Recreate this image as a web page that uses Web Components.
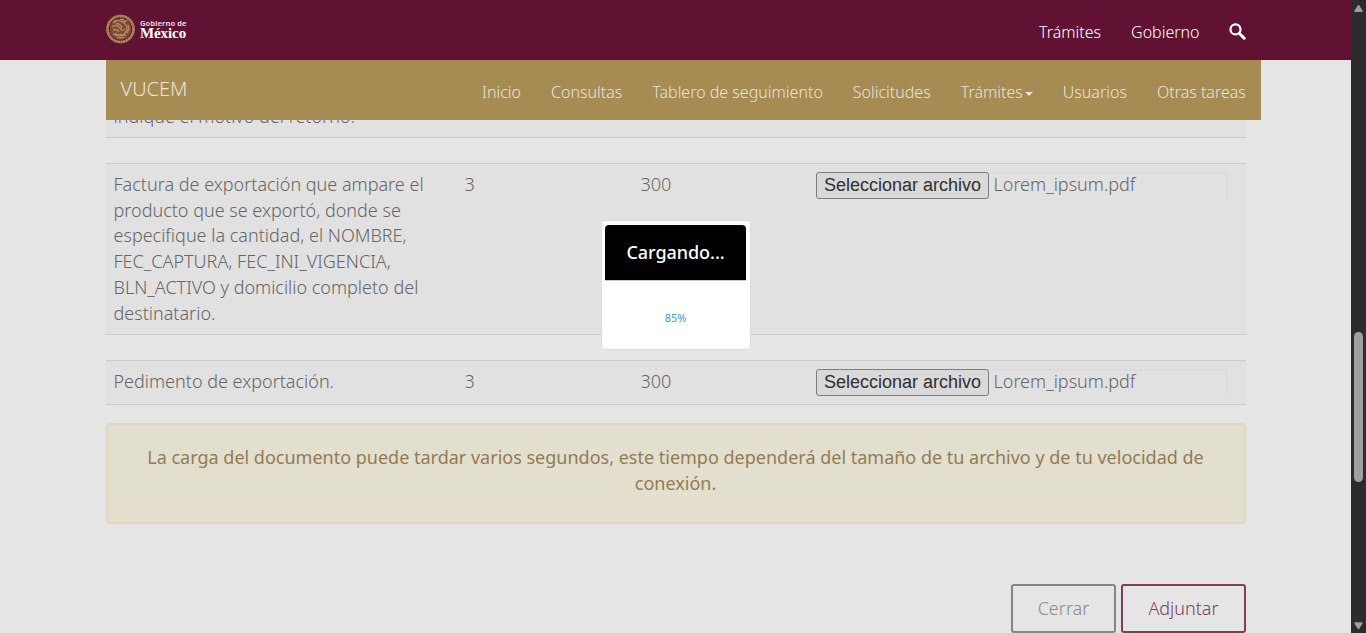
<!DOCTYPE html>
<html lang="es">
<head>
<meta charset="utf-8">
<title>VUCEM</title>
<style>
html,body{margin:0;height:100%;overflow:hidden;background:#e5e5e5}
body{font-family:"Noto Sans","Open Sans",sans-serif;font-weight:300;font-size:18px;line-height:25.7px;color:#666}
</style>
</head>
<body>
<vucem-app></vucem-app>
<script>
const define = (name, html) => customElements.define(name, class extends HTMLElement {
  constructor(){
    super();
    const t = document.createElement('template');
    t.innerHTML = html;
    this.attachShadow({mode:'open'}).appendChild(t.content.cloneNode(true));
  }
});

define('gob-logo', `<style>
:host{display:flex;align-items:center;gap:5px;color:#fff;height:30px}
svg{display:block}
.t{display:flex;flex-direction:column}
small{font:600 7.6px/9px "Noto Sans",sans-serif;letter-spacing:.1px;white-space:nowrap;color:#eee4e8}
b{font:700 15px/11px "Liberation Serif",serif;letter-spacing:-.1px}
</style>
<svg width="29" height="30" viewBox="0 0 29 30" fill="none" stroke="#b08a54">
<circle cx="14.5" cy="15" r="13" stroke-width="2.6" stroke="#94694a"/>
<circle cx="14.5" cy="15" r="13" stroke-width="2.4" stroke-dasharray="1.7 .9" stroke="#b28b55"/>
<circle cx="14.5" cy="15" r="10.8" fill="#80483f" stroke="none"/>
<path d="M8 9c2-3 6-3 8-1l4-1-2 2c3 2 4 6 2 9l-3 3c-3 1-6 0-8-2M6 13c3-2 6-2 8 1s4 3 5 1M7 16c3-1 5 0 6 2M10 10c3-1 5 1 6 4M7 20l4 1.5 4-1 5 1M11 23.5h7M22 11l1 4-2 4M10 6l-3 3M14 5.5h4" stroke-width="1.4"/>
</svg><span class="t"><small>Gobierno de</small><b>México</b></span>`);

define('gob-header', `<style>
:host{display:flex;box-sizing:border-box;height:60px;flex:none;background:#611232;color:#fff;padding:0 105px 0 106px;justify-content:space-between;align-items:flex-start;font-size:16px;line-height:24px}
gob-logo{margin-top:14px}
nav{display:flex;gap:30px;padding-top:20px}
svg{display:block;margin:3px 0 0 -.5px}
</style>
<gob-logo></gob-logo>
<nav><slot></slot><svg width="17" height="17" viewBox="0 0 17 17" fill="none" stroke="#fff"><circle cx="6.5" cy="6.4" r="5" stroke-width="2.2"/><path d="M10.2 10.2l5 5" stroke-width="3" stroke-linecap="round"/></svg></nav>`);

define('nav-item', `<style>
:host{display:flex;align-items:center;white-space:nowrap}
i{display:none;border:4px solid transparent;border-top-color:currentColor;border-bottom:0;margin:3px 0 0 2px}
:host([caret]) i{display:block}
</style><slot></slot><i></i>`);

define('vucem-nav', `<style>
:host{display:flex;box-sizing:border-box;width:1155px;height:60px;flex:none;margin-left:106px;padding:0 15.2px 0 14.5px;background:#a68b52;color:#e8e4de;justify-content:space-between}
.brand{font-size:20px;line-height:24px;padding-top:17px}
nav{display:flex;gap:30px;font-size:16px;line-height:24px;padding-top:20px;align-items:flex-start}
</style><span class="brand">VUCEM</span><nav><slot></slot></nav>`);

define('file-field', `<style>
:host{display:flex;box-sizing:border-box;width:412px;height:27px;border-top:2px solid #dcdcdc;border-right:2px solid #dddddd}
button{box-sizing:border-box;flex:none;width:173px;height:27px;margin:-2px 4.5px 0 0;padding:0;background:#d9d9d9;border:1px solid #7d7d7d;border-radius:3px;color:#2f2f2f;font:18px/23px "Liberation Sans",Arial,sans-serif;white-space:nowrap}
span{margin-top:-2px;white-space:nowrap}
</style><button>Seleccionar archivo</button><span><slot></slot></span>`);

define('doc-row', `<style>
:host{display:grid;grid-template-columns:351px 176px 175px 1fr;box-sizing:border-box;background:#e1e1e1;border-top:1px solid #cbcbcb;border-bottom:1px solid #cbcbcb;padding-top:8px;flex:none}
.c{padding-left:7.5px}
.c:first-child{padding-right:20px;padding-left:7px}
.c:last-child{padding-left:8px}
</style><div class="c"><slot></slot></div><div class="c"><slot name="min"></slot></div><div class="c"><slot name="max"></slot></div><div class="c"><slot name="file"></slot></div>`);

define('info-alert', `<style>
:host{display:block;box-sizing:border-box;height:101px;flex:none;margin-top:18px;padding:20px 38.5px 20px 37.5px;border:2px solid #e2d8c2;border-radius:4px;background:#e2dfcf;color:#927b55;text-align:center;font-weight:400}
</style><slot></slot>`);

define('gob-button', `<style>
:host{display:flex;box-sizing:border-box;justify-content:center;height:49px;border:2px solid #858585;border-radius:3px;color:#8a8a8a;line-height:45px}
:host([primary]){border-color:#7f3e58;color:#7f3e58}
</style><slot></slot>`);

define('loading-box', `<style>
:host{position:absolute;left:601px;top:220px;box-sizing:border-box;width:150px;height:130px;background:#fff;border:1px solid #dcdcdc;border-radius:4px;padding:4px 4px 3px 3px;text-align:center}
.h{height:55px;background:#000;color:#fff;border-radius:4px 4px 0 0;border-bottom:1px solid #ccc;font-size:18px;line-height:54px;font-weight:500;letter-spacing:-.05px}
.p{color:#3a9bd3;font-size:11px;line-height:16px;margin-top:29px;font-weight:400}
</style><div class="h"><slot></slot></div><div class="p"><slot name="progress"></slot></div>`);

define('scroll-rail', `<style>
:host{display:flex;flex-direction:column;align-items:center;background:#2c2c2c;height:633px}
svg{display:block;flex:none}
.thumb{width:9px;height:150px;border-radius:5px;background:#9f9f9f;margin-top:320px}
.dn{margin-top:auto;margin-bottom:3px}
</style><svg width="15" height="12" viewBox="0 0 15 12"><path d="M7.5 5.5L11 11.2H4z" fill="#9f9f9f" stroke="#9f9f9f" stroke-width="1.4" stroke-linejoin="round"/></svg><div class="thumb"></div><svg class="dn" width="15" height="9" viewBox="0 0 15 9"><path d="M4 2h7L7.5 7.5z" fill="#9f9f9f" stroke="#9f9f9f" stroke-width="1.4" stroke-linejoin="round"/></svg>`);

define('vucem-app', `<style>
:host{display:grid;grid-template-columns:1351px 15px;height:633px;position:relative;overflow:hidden}
.page{display:flex;flex-direction:column;height:633px;overflow:hidden}
gob-header,vucem-nav{position:relative;z-index:1}
main{display:flex;flex-direction:column;flex:1;min-height:0;width:1140px;margin-left:106px}
.prev{height:42px;margin-top:-24px;margin-bottom:25px;border-top:0;padding-top:8px}
.big{height:172px;margin-bottom:25px}
.small{height:45px}
.actions{display:flex;justify-content:flex-end;gap:5px;margin-top:60px}
.a{width:105px}.b{width:125px}
</style>
<div class="page">
<gob-header><nav-item>Trámites</nav-item><nav-item>Gobierno</nav-item></gob-header>
<vucem-nav><nav-item>Inicio</nav-item><nav-item>Consultas</nav-item><nav-item>Tablero de seguimiento</nav-item><nav-item>Solicitudes</nav-item><nav-item caret>Trámites</nav-item><nav-item>Usuarios</nav-item><nav-item>Otras tareas</nav-item></vucem-nav>
<main>
<doc-row class="prev">indique el motivo del retorno.</doc-row>
<doc-row class="big">Factura de exportación que ampare el producto que se exportó, donde se especifique la cantidad, el NOMBRE, FEC_CAPTURA, FEC_INI_VIGENCIA, BLN_ACTIVO y domicilio completo del destinatario.<span slot="min">3</span><span slot="max">300</span><file-field slot="file">Lorem_ipsum.pdf</file-field></doc-row>
<doc-row class="small">Pedimento de exportación.<span slot="min">3</span><span slot="max">300</span><file-field slot="file">Lorem_ipsum.pdf</file-field></doc-row>
<info-alert>La carga del documento puede tardar varios segundos, este tiempo dependerá del tamaño de tu archivo y de tu velocidad de conexión.</info-alert>
<div class="actions"><gob-button class="a">Cerrar</gob-button><gob-button class="b" primary>Adjuntar</gob-button></div>
</main>
</div>
<scroll-rail></scroll-rail>
<loading-box>Cargando...<span slot="progress">85%</span></loading-box>`);
</script>
</body>
</html>
